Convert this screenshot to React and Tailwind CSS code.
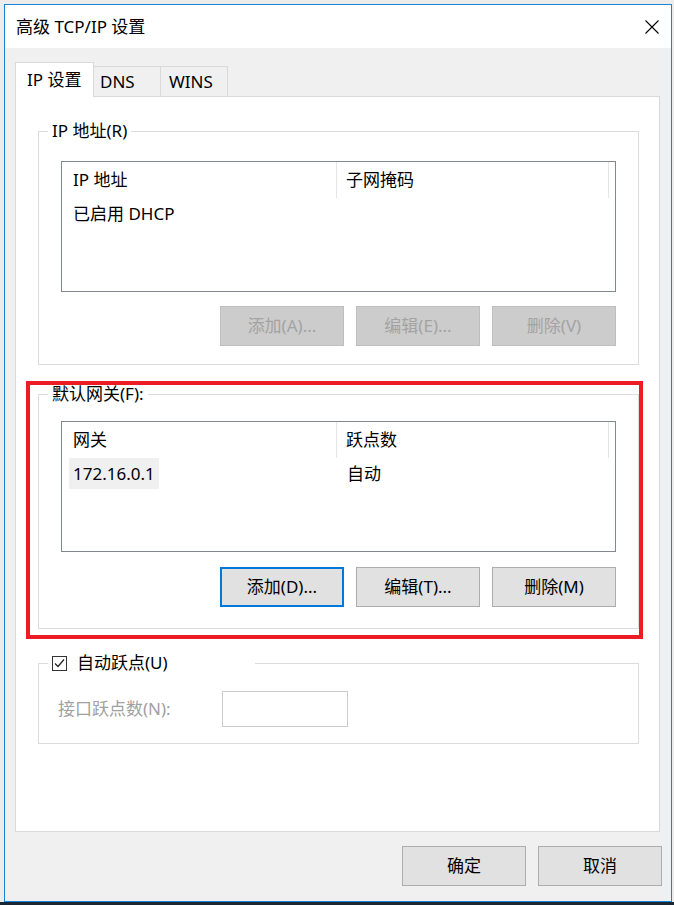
import React from "react";

function Btn({ children, disabled, focused }) {
    let cls =
        "w-[124px] h-[40px] flex items-center justify-center border bg-[#e1e1e1] border-[#adadad] text-black";
    if (disabled)
        cls =
            "w-[124px] h-[40px] flex items-center justify-center border bg-[#cccccc] border-[#bfbfbf] text-[#a3a3a3]";
    if (focused)
        cls =
            "w-[124px] h-[40px] flex items-center justify-center border-2 bg-[#e1e1e1] border-[#0078d7] text-black";
    return <div className={cls}>{children}</div>;
}

function ListView({ cols, row, selected }) {
    return (
        <div className="h-[131px] border border-[#828790] bg-white flex flex-col">
            <div className="flex h-[36px] items-center">
                <div className="w-[275px] h-full flex items-center pl-[11px] border-r border-[#e5e5e5]">
                    {cols[0]}
                </div>
                <div className="w-[272px] h-full flex items-center pl-[9px] border-r border-[#e5e5e5]">
                    {cols[1]}
                </div>
            </div>
            <div className="flex h-[31px] items-center">
                <div className="w-[275px] pl-[7px]">
                    <span
                        className={`inline-block px-[4px] leading-[31px] ${
                            selected ? "bg-[#f0f0f0]" : ""
                        }`}
                    >
                        {row[0]}
                    </span>
                </div>
                <div className="pl-[10px]">{row[1]}</div>
            </div>
        </div>
    );
}

export default function App() {
    return (
        <div className="w-[674px] h-[905px] bg-[#ececec] flex flex-col font-['Noto_Sans','Noto_Sans_CJK_SC',sans-serif] text-[17px] leading-[20px] text-black">
            <div className="flex-1 min-h-0 flex pt-[4px] pl-[4px] pr-[2px]">
                <div className="flex-1 flex flex-col border border-[#1883d7] bg-[#f0f0f0]">
                    {/* title bar */}
                    <div className="h-[43px] bg-white flex items-center justify-between pl-[11px] pr-[12px]">
                        <span>高级 TCP/IP 设置</span>
                        <svg width="14" height="14" viewBox="0 0 14 14">
                            <path
                                d="M0.5 0.5 L13.5 13.5 M13.5 0.5 L0.5 13.5"
                                stroke="#000"
                                strokeWidth="1.1"
                                fill="none"
                            />
                        </svg>
                    </div>

                    <div className="flex-1 flex flex-col pt-[14px] pl-[10px] pr-[9px] pb-[15px]">
                        {/* tabs */}
                        <div className="flex items-end h-[35px] -mb-px relative z-10">
                            <div className="w-[79px] h-[35px] bg-white border border-b-0 border-[#d9d9d9] flex items-center pl-[11px]">
                                IP 设置
                            </div>
                            <div className="w-[67px] h-[31px] bg-[#f0f0f0] border-t border-r border-b border-[#d9d9d9] flex items-center pl-[6px]">
                                DNS
                            </div>
                            <div className="w-[67px] h-[31px] bg-[#f0f0f0] border-t border-r border-b border-[#d9d9d9] flex items-center pl-[8px]">
                                WINS
                            </div>
                        </div>

                        {/* panel */}
                        <div className="flex-1 mr-[2px] bg-white border border-[#d9d9d9] pt-[24px] pl-[22px] pr-[20px]">
                            <fieldset className="border border-[#dcdcdc]">
                                <legend className="ml-[9px] px-[4px]">
                                    IP 地址(R)
                                </legend>
                                <div className="pt-[20px] pl-[22px] pr-[22px] pb-[18px] flex flex-col gap-[14px]">
                                    <ListView
                                        cols={["IP 地址", "子网掩码"]}
                                        row={["已启用 DHCP", ""]}
                                    />
                                    <div className="flex justify-end gap-[12px]">
                                        <Btn disabled>添加(A)...</Btn>
                                        <Btn disabled>编辑(E)...</Btn>
                                        <Btn disabled>删除(V)</Btn>
                                    </div>
                                </div>
                            </fieldset>

                            <div className="relative mt-[19px]">
                                <fieldset className="border border-[#dcdcdc]">
                                    <legend className="ml-[9px] px-[4px]">
                                        默认网关(F):
                                    </legend>
                                    <div className="pt-[17px] pl-[22px] pr-[22px] pb-[21px] flex flex-col gap-[15px]">
                                        <ListView
                                            cols={["网关", "跃点数"]}
                                            row={["172.16.0.1", "自动"]}
                                            selected
                                        />
                                        <div className="flex justify-end gap-[12px]">
                                            <Btn focused>添加(D)...</Btn>
                                            <Btn>编辑(T)...</Btn>
                                            <Btn>删除(M)</Btn>
                                        </div>
                                    </div>
                                </fieldset>
                                {/* red annotation */}
                                <div className="absolute -top-[3px] -left-[12px] -right-[4px] -bottom-[10px] border-4 border-[#ed1c24] pointer-events-none" />
                            </div>

                            <fieldset className="mt-[24px] border border-[#dcdcdc]">
                                <legend className="ml-[9px] px-[4px] w-[207px] flex items-center gap-[10px]">
                                    <svg width="15" height="15" viewBox="0 0 15 15">
                                        <rect
                                            x="0.5"
                                            y="0.5"
                                            width="14"
                                            height="14"
                                            fill="#fff"
                                            stroke="#333"
                                        />
                                        <path
                                            d="M3 7.5 L6 10.5 L12 3.5"
                                            stroke="#222"
                                            strokeWidth="1.2"
                                            fill="none"
                                        />
                                    </svg>
                                    <span>自动跃点(U)</span>
                                </legend>
                                <div className="pt-[18px] pl-[19px] pb-[16px] flex items-center">
                                    <span className="w-[164px] text-[#a0a0a0]">
                                        接口跃点数(N):
                                    </span>
                                    <div className="w-[126px] h-[36px] border border-[#cccccc] bg-white" />
                                </div>
                            </fieldset>
                        </div>

                        {/* dialog buttons */}
                        <div className="mt-[14px] flex justify-end gap-[12px]">
                            <Btn>确定</Btn>
                            <Btn>取消</Btn>
                        </div>
                    </div>
                </div>
            </div>
            <div className="h-[3px] bg-[#1b2633]" />
        </div>
    );
}
